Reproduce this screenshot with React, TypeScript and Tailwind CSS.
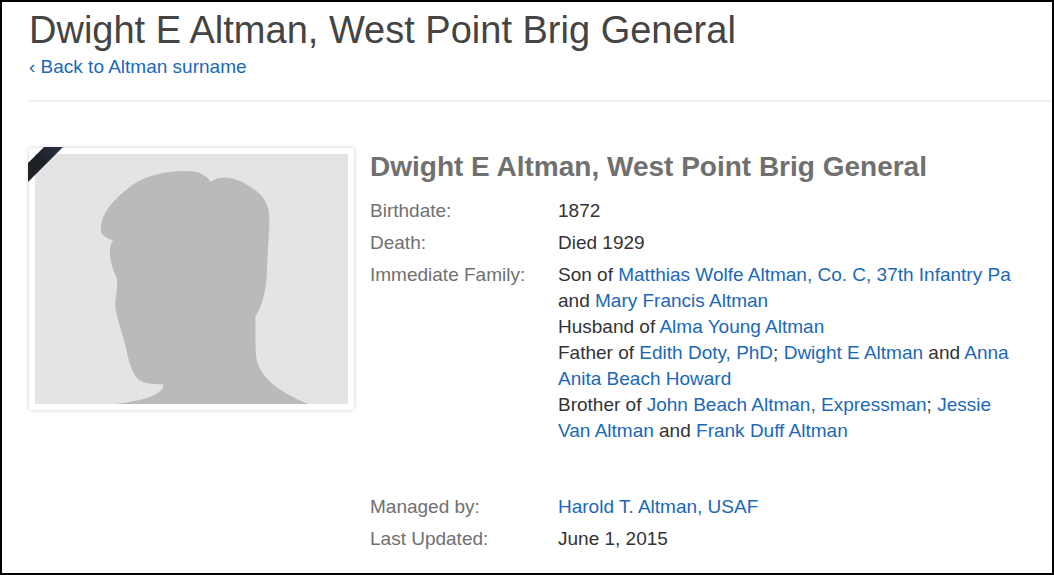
import type { ReactNode } from "react";

function ProfileLink({ children }: { children: ReactNode }) {
  return (
    <a href="#profile" className="text-[#1b68b8] hover:underline">
      {children}
    </a>
  );
}

interface RowProps {
  label: string;
  children: ReactNode;
}

function Row({ label, children }: RowProps) {
  return (
    <div className="flex">
      <dt className="w-[188px] shrink-0 text-[#707070]">{label}</dt>
      <dd className="min-w-0 flex-1">{children}</dd>
    </div>
  );
}

function Portrait() {
  return (
    <div className="relative shrink-0 self-start rounded-xs bg-white p-[6px] shadow-[0_0_4px_rgba(0,0,0,0.2)]">
      <svg viewBox="0 0 936 748" className="block h-[250px] w-[313px] bg-[#e4e4e4]" role="img" aria-label="No photo">
        <path
          fill="#b9babc"
          d="M240 748C310 740 355 728 378 706Q384 700 384 689C350 690 320 685 308 674C290 655 280 620 272 580C260 530 243 490 240 455C240 425 248 400 245 373C236 350 225 330 224 301C224 280 227 268 233 258C217 254 203 244 197 234C195 185 217 163 240 137C280 97 310 77 350 65C385 53 430 49 460 51C492 53 516 65 525 84C542 70 565 68 590 73C625 82 660 105 678 126C694 145 701 168 701 195C701 230 696 290 694 340C694 400 680 455 659 486C660 530 657 590 664 620C678 672 732 712 816 748Z"
        />
      </svg>
      {/* Mourning ribbon */}
      <svg viewBox="0 0 35 35" className="absolute -top-px -left-px h-[35px] w-[35px]" aria-hidden="true">
        <defs>
          <linearGradient id="ribbon" x1="0" y1="1" x2="1" y2="0">
            <stop offset="0" stopColor="#222326" />
            <stop offset="0.5" stopColor="#1d2027" />
            <stop offset="1" stopColor="#2b3346" />
          </linearGradient>
        </defs>
        <path fill="url(#ribbon)" d="M16 0H35L0 35V16Z" />
      </svg>
    </div>
  );
}

export default function App() {
  return (
    <main className="min-h-screen border-2 border-black bg-white pl-[27px] font-['Liberation_Sans',Arial,sans-serif] text-[19px] leading-[26px] text-[#333]">
      <header className="border-b-2 border-[#f2f2f2] pt-1 pb-5">
        <h1 className="text-[38px] leading-[48px] text-[#444]">Dwight E Altman, West Point Brig General</h1>
        <a href="#surname" className="text-[#1b68b8] hover:underline">
          ‹ Back to Altman surname
        </a>
      </header>

      <section className="flex gap-4 pt-[46px] pr-10">
        <Portrait />
        <div className="min-w-0 flex-1">
          <h2 className="text-[28px] leading-[38px] font-bold text-[#707070]">
            Dwight E Altman, West Point Brig General
          </h2>
          <dl className="flex flex-col gap-[6px] pt-3">
            <Row label="Birthdate:">1872</Row>
            <Row label="Death:">Died 1929</Row>
            <Row label="Immediate Family:">
              <p>
                Son of <ProfileLink>Matthias Wolfe Altman, Co. C, 37th Infantry Pa</ProfileLink> and{" "}
                <ProfileLink>Mary Francis Altman</ProfileLink>
              </p>
              <p>
                Husband of <ProfileLink>Alma Young Altman</ProfileLink>
              </p>
              <p>
                Father of <ProfileLink>Edith Doty, PhD</ProfileLink>; <ProfileLink>Dwight E Altman</ProfileLink> and{" "}
                <ProfileLink>Anna Anita Beach Howard</ProfileLink>
              </p>
              <p>
                Brother of <ProfileLink>John Beach Altman, Expressman</ProfileLink>;{" "}
                <ProfileLink>Jessie Van Altman</ProfileLink> and <ProfileLink>Frank Duff Altman</ProfileLink>
              </p>
            </Row>
          </dl>
          <dl className="flex flex-col gap-[6px] pt-[50px]">
            <Row label="Managed by:">
              <ProfileLink>Harold T. Altman, USAF</ProfileLink>
            </Row>
            <Row label="Last Updated:">June 1, 2015</Row>
          </dl>
        </div>
      </section>
    </main>
  );
}
